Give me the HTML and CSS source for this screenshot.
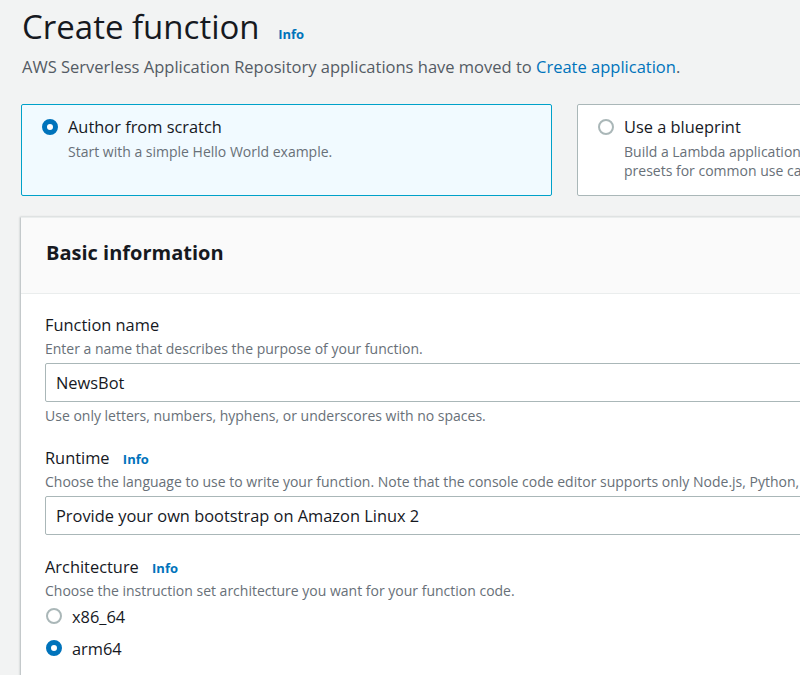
FILE: index.html
```html
<!DOCTYPE html>
<html lang="en">
<head>
<meta charset="utf-8">
<title>Create function</title>
<link rel="stylesheet" href="styles.css">
</head>
<body>
<main class="page">
  <h1 class="title">Create function <a class="info info-title" href="#">Info</a></h1>
  <p class="subtitle">AWS Serverless Application Repository applications have moved to <a class="link" href="#">Create application</a>.</p>

  <div class="tiles">
    <div class="tile tile-selected">
      <div class="tile-head"><span class="radio radio-on"></span><span class="tile-label">Author from scratch</span></div>
      <div class="tile-desc">Start with a simple Hello World example.</div>
    </div>
    <div class="tile">
      <div class="tile-head"><span class="radio"></span><span class="tile-label">Use a blueprint</span></div>
      <div class="tile-desc">Build a Lambda application from sample code and configuration presets for common use cases.</div>
    </div>
  </div>

  <section class="panel">
    <header class="panel-header"><h2 class="panel-title">Basic information</h2></header>
    <div class="panel-body">
      <div class="field">
        <div class="label">Function name</div>
        <div class="desc">Enter a name that describes the purpose of your function.</div>
        <div class="input">NewsBot</div>
        <div class="hint">Use only letters, numbers, hyphens, or underscores with no spaces.</div>
      </div>
      <div class="field">
        <div class="label">Runtime <a class="info" href="#">Info</a></div>
        <div class="desc">Choose the language to use to write your function. Note that the console code editor supports only Node.js, Python, and Ruby.</div>
        <div class="input">Provide your own bootstrap on Amazon Linux 2</div>
      </div>
      <div class="field">
        <div class="label">Architecture <a class="info" href="#">Info</a></div>
        <div class="desc">Choose the instruction set architecture you want for your function code.</div>
        <div class="radio-group">
          <div class="radio-row"><span class="radio"></span><span class="radio-text">x86_64</span></div>
          <div class="radio-row"><span class="radio radio-on"></span><span class="radio-text">arm64</span></div>
        </div>
      </div>
    </div>
  </section>
</main>
</body>
</html>
```

FILE: styles.css
```css
html, body {
  margin: 0;
  padding: 0;
  overflow: hidden;
}
body {
  background: #f2f3f3;
  font-family: "Open Sans", "Noto Sans", sans-serif;
  color: #16191f;
}
.page {
  width: 1200px;
  padding-left: 21px;
}
.title {
  margin: 6px 0 0 1px;
  font-size: 33px;
  line-height: 42px;
  font-weight: 400;
}
.info {
  color: #0073bb;
  font-weight: 700;
  font-size: 13px;
  line-height: 1;
  text-decoration: none;
}
.info-title {
  margin-left: 10px;
}
.subtitle {
  margin: 7px 0 0 1px;
  font-size: 16.5px;
  line-height: 24px;
  color: #545b64;
}
.link {
  color: #0073bb;
  text-decoration: none;
}
.tiles {
  margin-top: 25px;
  display: grid;
  grid-template-columns: 531px 531px;
  column-gap: 25px;
}
.tile {
  background: #fff;
  border: 1px solid #aab7b8;
  border-radius: 2px;
  padding: 10px 20px 15px 20px;
}
.tile-selected {
  background: #f1faff;
  border-color: #00a1c9;
}
.tile-head {
  display: flex;
  align-items: center;
  gap: 10px;
  height: 24px;
}
.tile-label {
  font-size: 16.4px;
  line-height: 24px;
}
.tile-desc {
  margin-top: 3px;
  padding-left: 26px;
  font-size: 14px;
  line-height: 19px;
  color: #687078;
  width: 460px;
}
.radio {
  width: 16px;
  height: 16px;
  box-sizing: border-box;
  border-radius: 50%;
  border: 2px solid #aab7b8;
  background: #fff;
  flex: none;
}
.radio-on {
  border: 5px solid #0073bb;
}
.panel {
  margin-top: 21px;
  background: #fff;
  box-shadow: -1px 0 2px rgba(0, 28, 36, 0.25), 0 1px 1px rgba(0, 28, 36, 0.15);
  border-top: 1px solid #eaeded;
}
.panel-header {
  background: #fafafa;
  border-bottom: 1px solid #eaeded;
  padding: 21px 25px 26px;
}
.panel-title {
  margin: 0;
  font-size: 20px;
  line-height: 28px;
  font-weight: 700;
}
.panel-body {
  padding: 9px 24px 20px;
}
.field {
  padding-top: 11px;
}
.field + .field {
  padding-top: 21px;
}
.label {
  font-size: 16.4px;
  line-height: 22px;
}
.label .info {
  margin-left: 9px;
}
.desc {
  margin-top: 3px;
  font-size: 14px;
  line-height: 20px;
  color: #687078;
  white-space: nowrap;
}
.input {
  margin-top: 4px;
  height: 39px;
  box-sizing: border-box;
  border: 1px solid #aab7b8;
  border-radius: 2px;
  padding: 0 10px;
  font-size: 16.4px;
  line-height: 37px;
  background: #fff;
}
.hint {
  margin-top: 4px;
  font-size: 14px;
  line-height: 20px;
  color: #687078;
}
.radio-group {
  margin-top: -1px;
}
.radio-row {
  display: flex;
  align-items: center;
  gap: 10px;
  height: 32px;
  padding-left: 1px;
}
.radio-text {
  font-size: 16.4px;
}
```
